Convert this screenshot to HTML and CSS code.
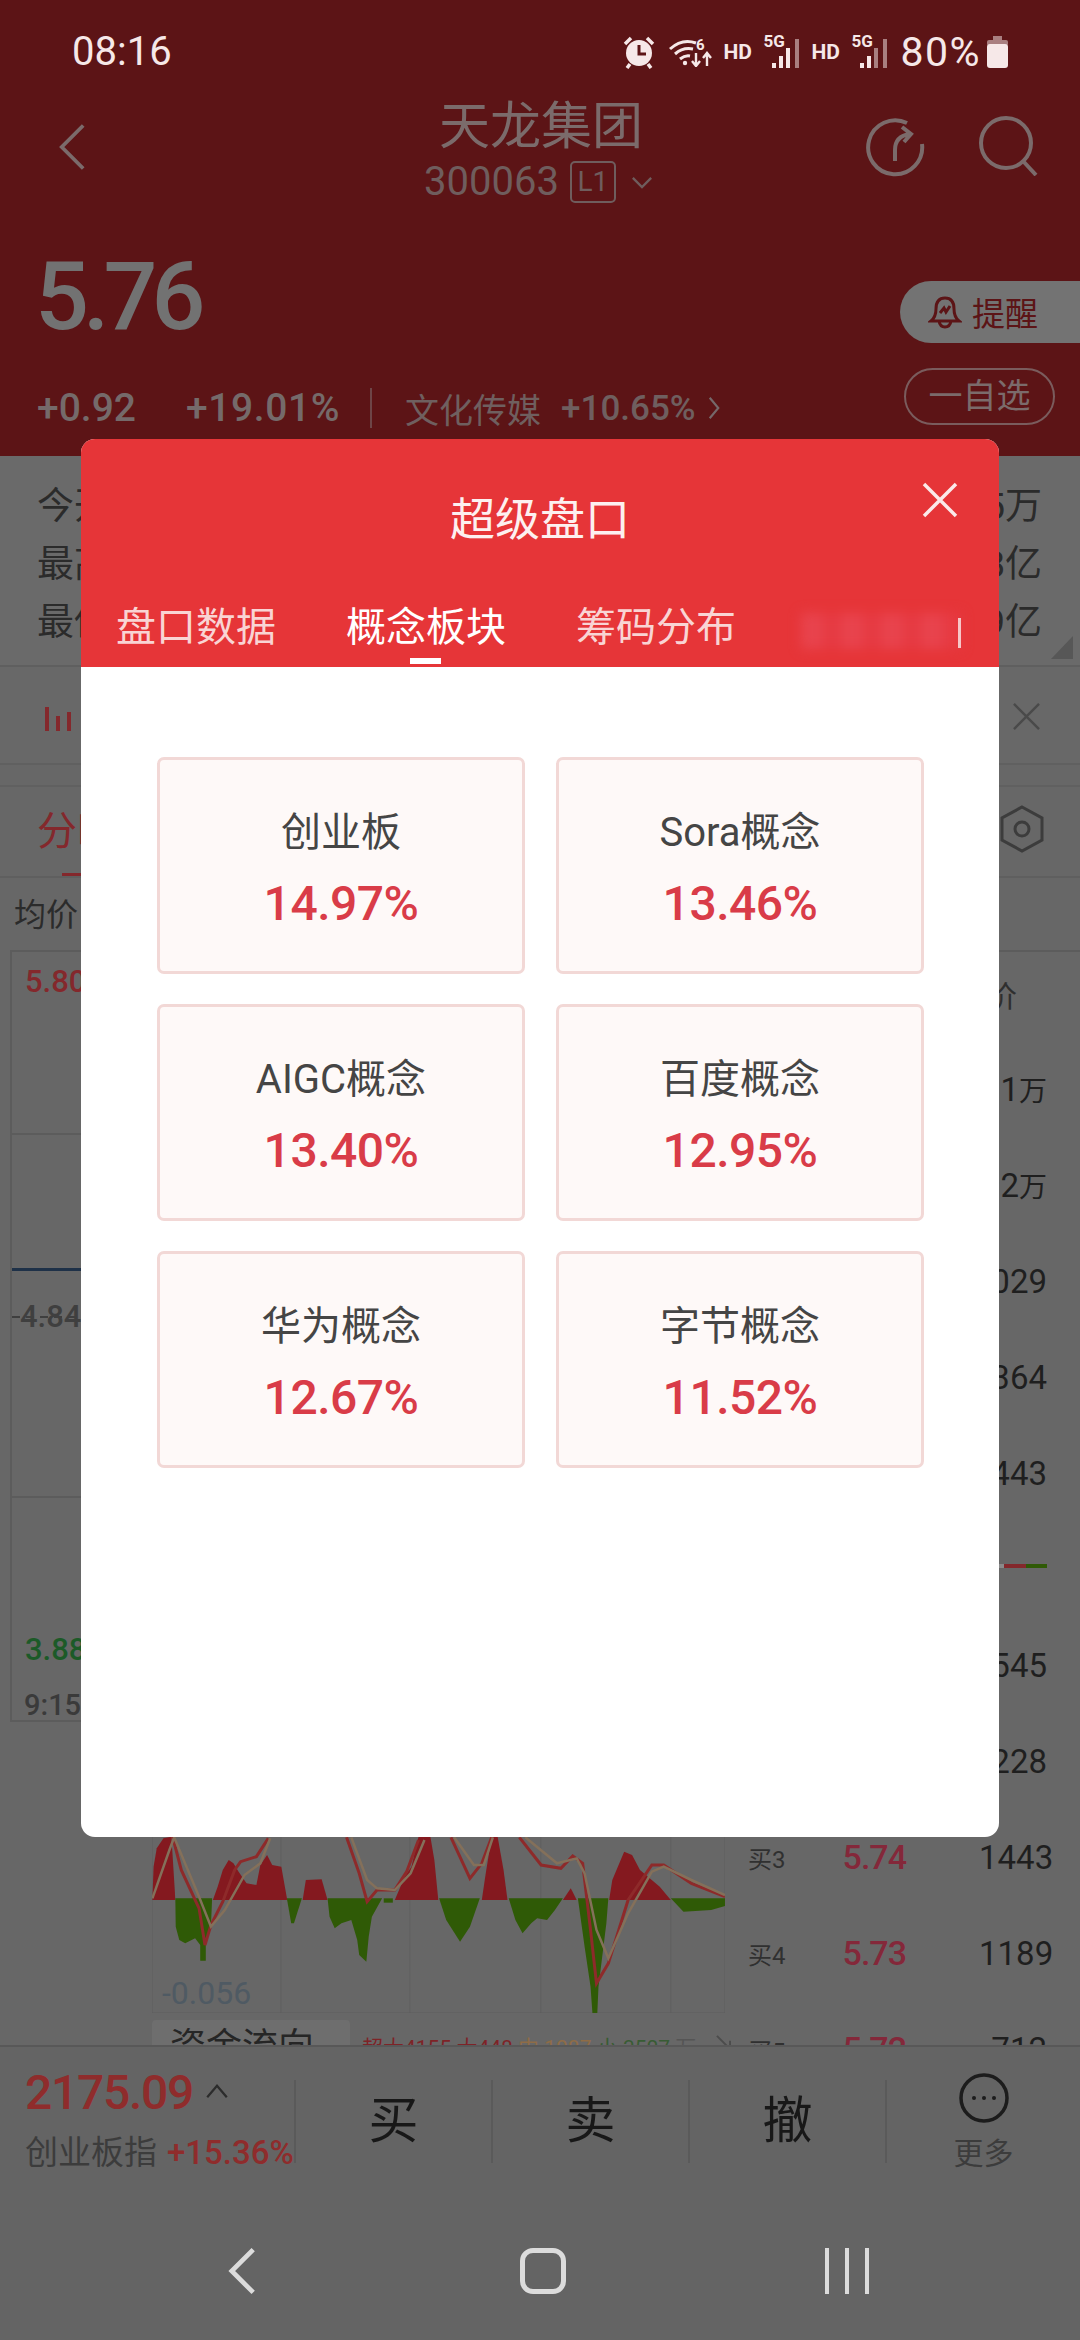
FILE: index.html
```html
<!doctype html>
<html lang="zh-CN">
<head>
	<meta charset="utf-8" />
	<title>超级盘口</title>
	<link rel="stylesheet" href="styles.css">
</head>

<body>
	<div class="head">
		<div class="status">
			<span class="time">08:16</span>
			<div class="status-right">
				<svg class="ic-alarm" viewBox="0 0 32 34"><path d="M2 9 L8 3 M30 9 L24 3 M7 29 L4 33 M25 29 L28 33" stroke="#f6e8e8" stroke-width="3.5" fill="none"/><circle cx="16" cy="18" r="13" fill="#f6e8e8"/><path d="M16 10 V19 H23" stroke="#5c1416" stroke-width="3" fill="none"/></svg>
				<svg class="ic-wifi" viewBox="0 0 44 30"><path d="M1 12 Q13 1 27 6 M6 17 Q14 10 24 12 M11 22 Q16 18 21 19" stroke="#f6e8e8" stroke-width="3" fill="none"/><circle cx="16" cy="26" r="2.2" fill="#f6e8e8"/><text x="27" y="13" class="wifi-six">6</text><path d="M27 16 V28 M23 24 L27 29 L31 24 M38 29 V17 M34 21 L38 16 L42 21" stroke="#f6e8e8" stroke-width="2.4" fill="none"/></svg>
				<span class="hd">HD</span>
				<div class="sig">
					<span class="five-g">5G</span>
					<svg class="ic-sig" viewBox="0 0 29 30"><rect x="0" y="25" width="4" height="5" fill="#f6e8e8"/><rect x="7" y="18" width="4" height="12" fill="#f6e8e8"/><rect x="14" y="10" width="4" height="20" fill="#f6e8e8"/><rect x="23" y="1" width="4" height="29" fill="#a97f80"/></svg>
				</div>
				<span class="hd hd2">HD</span>
				<div class="sig">
					<span class="five-g">5G</span>
					<svg class="ic-sig" viewBox="0 0 29 30"><rect x="0" y="25" width="4" height="5" fill="#f6e8e8"/><rect x="7" y="18" width="4" height="12" fill="#f6e8e8"/><rect x="14" y="10" width="4" height="20" fill="#a97f80"/><rect x="23" y="1" width="4" height="29" fill="#a97f80"/></svg>
				</div>
				<span class="batt-num">80%</span>
				<svg class="ic-batt" viewBox="0 0 21 32"><path d="M6 0 H15 V4 H6 Z" fill="#a97f80"/><rect x="0" y="4" width="21" height="6" rx="2" fill="#a97f80"/><rect x="0" y="8" width="21" height="24" rx="3" fill="#f6e8e8"/></svg>
			</div>
		</div>

		<div class="nav">
			<svg class="ic-back" viewBox="0 0 30 50"><path d="M27 2 L4 25 L27 48" stroke="#7b6b6b" stroke-width="4" fill="none"/></svg>
			<div class="nav-mid">
				<div class="stock-name">天龙集团</div>
				<div class="stock-code">
					<span>300063</span>
					<span class="level">L1</span>
					<svg class="ic-down" viewBox="0 0 24 14"><path d="M2 2 L12 12 L22 2" stroke="#6f5d5d" stroke-width="2.5" fill="none"/></svg>
				</div>
			</div>
			<div class="nav-right">
				<svg class="ic-share" viewBox="0 0 60 60"><path d="M41 5 A27 27 0 1 0 56 26" stroke="#7b6b6b" stroke-width="4" fill="none"/><path d="M29 43 V32 Q29 18 44 16 M36 9 L45 16 L38 24" stroke="#7b6b6b" stroke-width="4" fill="none"/></svg>
				<svg class="ic-search" viewBox="0 0 60 60"><circle cx="28" cy="27" r="25" stroke="#7b6b6b" stroke-width="4" fill="none"/><path d="M45 45 L58 59" stroke="#7b6b6b" stroke-width="4" fill="none"/></svg>
			</div>
		</div>

		<div class="quote">
			<div class="quote-left">
				<div class="price">5.76</div>
				<div class="change">
					<b>+0.92</b>
					<b class="pct">+19.01%</b>
					<span class="sector">文化传媒</span>
					<span class="sector-pct">+10.65%</span>
					<svg class="ic-more" viewBox="0 0 14 28"><path d="M2 2 L12 14 L2 26" stroke="#75686a" stroke-width="2.5" fill="none"/></svg>
				</div>
			</div>
			<div class="quote-right">
				<div class="remind">
					<svg class="ic-bell" viewBox="0 0 34 34"><path d="M3 26 Q8 22 8 14 Q8 3 17 3 Q26 3 26 14 Q26 22 31 26 Z M11 26 Q12 32 17 32 Q22 32 23 26 M12 18 L16 13 L18 17 L22 11" stroke="#5c1416" stroke-width="3" fill="none"/></svg>
					<span>提醒</span>
				</div>
				<div class="watch">一自选</div>
			</div>
		</div>
	</div>

	<div class="stats">
		<div class="stat-line"><span>今开</span><span>5万</span></div>
		<div class="stat-line"><span>最高</span><span>8亿</span></div>
		<div class="stat-line"><span>最低</span><span>9亿</span></div>
		<i class="corner"></i>
	</div>

	<div class="notice">
		<svg class="ic-bars" viewBox="0 0 40 24"><rect x="0" y="0" width="4" height="24" fill="#84282c"/><rect x="11" y="9" width="4" height="15" fill="#84282c"/><rect x="22" y="5" width="4" height="19" fill="#84282c"/></svg>
		<svg class="ic-x" viewBox="0 0 28 28"><path d="M1 1 L27 27 M27 1 L1 27" stroke="#4a4a4a" stroke-width="2.5" fill="none"/></svg>
	</div>

	<div class="chart-tabs">
		<span class="chart-tab">分时</span>
		<svg class="ic-hex" viewBox="0 0 44 48"><path d="M22 2 L42 13 V35 L22 46 L2 35 V13 Z" stroke="#3c3c3c" stroke-width="3" fill="none"/><circle cx="22" cy="24" r="7" stroke="#3c3c3c" stroke-width="3" fill="none"/></svg>
	</div>

	<div class="avg-row">均价</div>

	<div class="market">
		<div class="market-left">
			<div class="price-chart">
				<span class="axis axis-top">5.80</span>
				<i class="hline hline-a"></i>
				<i class="hline hline-blue"></i>
				<span class="axis axis-mid">4.84</span>
				<i class="hline hline-dash"></i>
				<i class="hline hline-b"></i>
				<span class="axis axis-low">3.88</span>
				<span class="axis axis-time">9:15</span>
			</div>
			<div class="macd">
				<svg viewBox="56 0 1449 549" preserveAspectRatio="none">
					<path d="M56 0 V549 H1505 V0 M382 0 V549 M708 0 V549 M1039 0 V549 M1368 0 V549" stroke="#5c5c5c" stroke-width="2" fill="none"/>
					<g fill="#84191f">
						<path d="M57 210 L60 110 L68 55 L85 25 L105 20 L112 150 L115 210 Z"/>
						<path d="M210 210 L222 170 L235 120 L250 90 L262 100 L275 125 L295 160 L320 165 L330 105 L347 75 L360 105 L383 110 L398 210 Z"/>
						<path d="M437 210 L445 150 L485 148 L500 210 Z"/>
						<path d="M670 210 L695 140 L712 110 L730 20 L760 20 L770 90 L780 210 Z"/>
						<path d="M890 210 L900 130 L915 20 L930 20 L945 120 L955 210 Z"/>
						<path d="M1095 210 L1115 175 L1130 210 Z"/>
						<path d="M1212 210 L1220 150 L1250 65 L1270 75 L1290 120 L1340 170 L1368 210 Z"/>
					</g>
					<g fill="#2f5a06">
						<path d="M115 205 L116 290 L125 330 L140 340 L165 325 L178 345 L178 392 L192 392 L192 345 L205 290 L208 205 Z"/>
						<path d="M397 205 L408 280 L415 280 L435 205 Z"/>
						<path d="M500 205 L505 260 L518 295 L535 280 L560 270 L575 330 L580 375 L598 395 L604 320 L612 260 L638 205 Z"/>
						<path d="M642 205 H665 V218 H642 Z"/>
						<path d="M782 205 L800 270 L835 335 L860 290 L885 205 Z"/>
						<path d="M958 205 L975 270 L993 310 L1015 280 L1030 265 L1055 270 L1075 240 L1095 205 Z"/>
						<path d="M1133 205 L1150 350 L1165 470 L1170 553 L1182 553 L1185 470 L1205 280 L1210 205 Z"/>
						<path d="M1368 205 L1400 245 L1470 240 L1505 228 V205 Z"/>
					</g>
					<g class="macd-red">
						<path d="M108 20 L130 120 L175 235 L190 345 L205 285 L235 215 L265 120 L280 95 L320 80 L350 25"/>
						<path d="M548 22 L580 130 L600 215 L625 180 L670 180 L700 125 L730 30"/>
						<path d="M812 22 L860 145 L890 100 L915 22"/>
						<path d="M985 22 L1040 105 L1090 115 L1120 78 L1145 100 L1165 300 L1180 460 L1210 400 L1260 210 L1320 105 L1350 105 L1420 160 L1505 200"/>
					</g>
					<g class="macd-tan">
						<path d="M57 205 L100 60 L112 22 L175 200 L205 290 L240 240 L290 135 L330 100 L355 25"/>
						<path d="M560 22 L600 150 L625 175 L670 180 L710 130 L745 30"/>
						<path d="M820 22 L870 105 L895 105 L918 22"/>
						<path d="M1000 22 L1080 100 L1130 85 L1150 130 L1180 300 L1210 385 L1260 250 L1320 125 L1350 110 L1420 150 L1505 195"/>
					</g>
				</svg>
				<span class="macd-val">-0.056</span>
			</div>
			<div class="fund-row">
				<span class="fund-chip">资金流向</span>
				<span class="fund-text"><em class="f-red">超大4155 大448</em> <em class="f-tan">中 1087</em> <em class="f-green">小 3507</em> 万</span>
				<svg class="ic-fund" viewBox="0 0 16 16"><path d="M1 1 L15 15 M15 6 V15 H6" stroke="#4c4c4c" stroke-width="2" fill="none"/></svg>
			</div>
		</div>
		<div class="book">
			<div class="book-row book-head">价</div>
			<div class="book-row">31<span class="wan">万</span></div>
			<div class="book-row">92<span class="wan">万</span></div>
			<div class="book-row">029</div>
			<div class="book-row">364</div>
			<div class="book-row">443</div>
			<div class="book-row book-ratio"><i class="r-gray"></i><i class="r-red"></i><i class="r-green"></i></div>
			<div class="book-row">545</div>
			<div class="book-row">228</div>
			<div class="book-row"><span class="b-label">买3</span><span class="b-price">5.74</span><span class="b-vol">1443</span></div>
			<div class="book-row"><span class="b-label">买4</span><span class="b-price">5.73</span><span class="b-vol">1189</span></div>
			<div class="book-row"><span class="b-label">买5</span><span class="b-price">5.72</span><span class="b-vol">712</span></div>
		</div>
	</div>

	<div class="bottom">
		<div class="index">
			<div class="index-top">
				<span class="index-num">2175.09</span>
				<svg class="ic-up" viewBox="0 0 26 18"><path d="M2 16 L13 3 L24 16" stroke="#2c2c2c" stroke-width="2.5" fill="none"/></svg>
			</div>
			<div class="index-sub"><span>创业板指</span> <b>+15.36%</b></div>
		</div>
		<div class="act">买</div>
		<div class="act">卖</div>
		<div class="act">撤</div>
		<div class="act-more">
			<svg class="ic-dots" viewBox="0 0 50 50"><circle cx="25" cy="25" r="23" stroke="#1c1c1c" stroke-width="3.5" fill="none"/><circle cx="15" cy="25" r="2" fill="#1c1c1c"/><circle cx="25" cy="25" r="2" fill="#1c1c1c"/><circle cx="35" cy="25" r="2" fill="#1c1c1c"/></svg>
			<span>更多</span>
		</div>
	</div>

	<div class="sysnav">
		<svg class="ic-sys-back" viewBox="0 0 30 50"><path d="M27 2 L4 25 L27 48" stroke="#dcdcdc" stroke-width="5" fill="none"/></svg>
		<i class="sys-home"></i>
		<div class="sys-recent"><i></i><i></i><i></i></div>
	</div>

	<!-- popup -->
	<div class="modal">
		<div class="modal-head">
			<div class="modal-title">超级盘口</div>
			<svg class="modal-close" viewBox="0 0 36 36"><path d="M2 2 L34 34 M34 2 L2 34" stroke="#fbe9e9" stroke-width="3.5" fill="none"/></svg>
			<div class="modal-tabs">
				<span class="modal-tab">盘口数据</span>
				<span class="modal-tab modal-tab-on">概念板块</span>
				<span class="modal-tab">筹码分布</span>
				<span class="modal-tab-blur"><i></i><b></b></span>
			</div>
		</div>
		<div class="cards">
			<div class="card"><div class="card-name">创业板</div><div class="card-pct">14.97%</div></div>
			<div class="card"><div class="card-name">Sora概念</div><div class="card-pct">13.46%</div></div>
			<div class="card"><div class="card-name">AIGC概念</div><div class="card-pct">13.40%</div></div>
			<div class="card"><div class="card-name">百度概念</div><div class="card-pct">12.95%</div></div>
			<div class="card"><div class="card-name">华为概念</div><div class="card-pct">12.67%</div></div>
			<div class="card"><div class="card-name">字节概念</div><div class="card-pct">11.52%</div></div>
		</div>
	</div>
</body>
</html>
```

FILE: styles.css
```css
/*reset*/
body,div,p{margin:0;padding:0;}
i,em{font-style:normal;}
svg{display:block;flex:none;}
body{position:relative;width:1080px;height:2340px;overflow:hidden;background:#676767;color:#262626;font-family:Roboto,"Noto Sans CJK SC",sans-serif;}

/*head*/
.head{height:456px;background:#5c1416;}
.status{height:104px;display:flex;justify-content:space-between;align-items:center;padding:0 72px;}
.time{font-size:40px;color:#f6e8e8;line-height:1;}
.status-right{display:flex;align-items:center;}
.ic-alarm{width:32px;height:34px;margin-right:14px;}
.ic-wifi{width:44px;height:30px;margin-right:10px;}
.wifi-six{font-size:15px;font-weight:700;fill:#f6e8e8;}
.hd{font-size:21px;font-weight:700;color:#f6e8e8;width:28px;}
.hd2{margin-left:11px;}
.sig{position:relative;width:37px;height:32px;margin-left:12px;}
.five-g{position:absolute;left:0;top:-5px;font-size:17px;font-weight:700;color:#f6e8e8;}
.ic-sig{position:absolute;left:9px;top:2px;width:29px;height:30px;}
.batt-num{font-size:41px;color:#f6e8e8;letter-spacing:1.5px;margin-left:12px;}
.ic-batt{width:21px;height:32px;margin-left:6px;}

.nav{height:106px;display:grid;grid-template-columns:1fr auto 1fr;align-items:start;padding:0 42px 0 44px;box-sizing:border-box;}
.ic-back{width:28px;height:48px;margin:19px 0 0 14px;}
.nav-mid{text-align:center;margin-top:-7px;}
.stock-name{font-size:51px;line-height:60px;color:#7b6b6b;}
.stock-code{display:flex;align-items:center;gap:11px;margin:3px 0 0 -5px;color:#6f5d5d;font-size:40px;line-height:44px;}
.level{border:2px solid #6f5d5d;border-radius:5px;font-size:28px;line-height:38px;width:42px;text-align:center;}
.ic-down{width:22px;height:13px;margin-left:4px;}
.nav-right{display:flex;justify-content:flex-end;gap:52px;margin-top:14px;}
.ic-share{width:60px;height:60px;}
.ic-search{width:60px;height:60px;margin-top:-2px;}

.quote{display:flex;justify-content:space-between;}
.quote-left{padding:36px 0 0 35px;}
.price{font-size:95px;font-weight:500;line-height:102px;letter-spacing:-6px;color:#727272;}
.change{display:flex;align-items:center;margin:40px 0 0 2px;height:40px;color:#6f6666;}
.change b{font-size:39px;font-weight:500;color:#756a6a;}
.change .pct{margin-left:50px;padding-right:30px;border-right:2px solid #6e4547;line-height:40px;letter-spacing:.6px;}
.sector{font-size:34px;margin-left:33px;color:#6f5f5f;}
.sector-pct{font-size:35px;font-weight:500;margin-left:20px;color:#6f5f5f;}
.ic-more{width:12px;height:24px;margin-left:12px;}
.quote-right{display:flex;flex-direction:column;align-items:flex-end;padding-top:71px;}
.remind{width:180px;height:62px;box-sizing:border-box;background:#737373;border-radius:31px 0 0 31px;display:flex;align-items:center;padding-left:28px;gap:10px;color:#5c1416;font-size:33px;}
.ic-bell{width:34px;height:34px;}
.watch{width:151px;height:57px;box-sizing:border-box;margin:25px 25px 0 0;border:2px solid #7a5c5d;border-radius:29px;text-align:center;line-height:52px;font-size:34px;color:#7b6b6b;}

/*stats*/
.stats{position:relative;height:211px;box-sizing:border-box;padding:22px 38px 0 37px;border-bottom:2px solid #5f5f5f;background:#6a6a6a;}
.stat-line{display:flex;justify-content:space-between;font-size:37px;line-height:58px;color:#2b2b2b;}
.corner{position:absolute;right:7px;bottom:6px;border-style:solid;border-width:0 0 23px 22px;border-color:transparent transparent #575757 transparent;}

.notice{height:98px;box-sizing:border-box;padding:40px 40px 0 45px;display:flex;justify-content:space-between;align-items:flex-start;background:#686868;border-bottom:2px solid #606060;}
.ic-bars{width:40px;height:24px;}
.ic-x{width:27px;height:27px;margin-top:-4px;}

.chart-tabs{margin-top:20px;height:93px;box-sizing:border-box;padding:0 36px 0 37px;display:flex;justify-content:space-between;align-items:flex-start;border-bottom:2px solid #5f5f5f;border-top:2px solid #606060;}
.chart-tab{position:relative;height:89px;box-sizing:border-box;padding-top:15px;font-size:40px;line-height:60px;color:#84282c;}
.chart-tab::after{content:"";position:absolute;left:25px;bottom:0;width:40px;height:3px;background:#84282c;}
.ic-hex{width:44px;height:48px;margin-top:18px;}
.avg-row{height:72px;box-sizing:border-box;padding:15px 0 0 14px;font-size:32px;line-height:44px;color:#2b2b2b;}

/*market*/
.market{display:flex;height:1095px;overflow:hidden;}
.market-left{width:725px;}
.price-chart{position:relative;height:772px;margin-left:10px;box-sizing:border-box;border-top:2px solid #5c5c5c;border-left:2px solid #5c5c5c;border-bottom:2px solid #5c5c5c;}
.axis{position:absolute;left:13px;font-size:31px;font-weight:500;line-height:36px;}
.axis-top{top:12px;color:#84282c;}
.axis-mid{top:347px;color:#3f3f3f;left:8px;}
.axis-low{top:680px;color:#1c5a28;}
.axis-time{top:735px;left:12px;font-size:29px;color:#3a3a3a;}
.hline{position:absolute;left:0;right:0;height:2px;background:#5c5c5c;}
.hline-a{top:181px;}
.hline-blue{top:316px;background:#1e3148;height:3px;}
.hline-dash{top:364px;background:repeating-linear-gradient(90deg,#3f3f3f 0 8px,transparent 8px 14px);}
.hline-b{top:544px;}
.macd{position:relative;width:573px;height:183px;margin:108px 0 0 152px;}
.macd svg{width:573px;height:183px;}
.macd-red path{stroke:#8e2a2a;stroke-width:3;fill:none;vector-effect:non-scaling-stroke;}
.macd-tan path{stroke:#84705a;stroke-width:2.5;fill:none;vector-effect:non-scaling-stroke;}
.macd-val{position:absolute;left:10px;bottom:2px;font-size:32px;line-height:36px;color:#4f5a63;}
.fund-row{display:flex;align-items:flex-start;margin:7px 0 0 152px;white-space:nowrap;}
.fund-chip{flex:none;width:198px;box-sizing:border-box;padding-left:18px;background:#6e6e6e;border-radius:4px;height:60px;font-size:36px;line-height:54px;color:#262626;}
.fund-text{margin:13px 0 0 12px;font-size:21px;color:#555;line-height:30px;}
.f-red{color:#7e2327;}
.f-tan{color:#8f6c46;}
.f-green{color:#385c34;}
.ic-fund{width:15px;height:15px;margin:15px 0 0 20px;}

.book{width:355px;box-sizing:border-box;padding-right:33px;border-top:2px solid #5c5c5c;}
.book-row{height:96px;display:flex;justify-content:flex-end;align-items:center;font-size:33px;color:#1f1f1f;}
.book-head{font-size:30px;color:#2f2f2f;padding:0 30px 5px 0;height:89px;box-sizing:border-box;}
.wan{font-size:28px;}
.book-ratio{padding-bottom:6px;box-sizing:border-box;}
.book-ratio i{height:4px;}
.r-gray{width:8px;background:#8a8a8a;}
.r-red{width:22px;background:#84282c;}
.r-green{width:21px;background:#2f5a06;}
.b-label{font-size:24px;color:#303030;margin-right:auto;margin-left:23px;}
.b-price{font-size:34px;font-weight:500;letter-spacing:-1px;color:#84283a;margin-right:73px;}
.b-vol{font-size:33px;width:68px;text-align:right;}

/*bottom*/
.bottom{height:155px;box-sizing:border-box;border-top:2px solid #585858;background:#646464;display:grid;grid-template-columns:294px 197px 197px 197px 195px;}
.index{padding:18px 0 0 25px;white-space:nowrap;}
.index-top{display:flex;align-items:center;gap:12px;}
.index-num{font-size:48px;font-weight:500;line-height:56px;letter-spacing:-1.3px;color:#8f2c2c;}
.ic-up{width:24px;height:16px;margin-top:-4px;}
.index-sub{margin-top:10px;font-size:33px;line-height:44px;color:#3c3c3c;display:flex;gap:10px;}
.index-sub b{font-size:33px;font-weight:500;color:#8f2c2c;}
.act{align-self:start;height:83px;margin-top:33px;border-left:2px solid #5a5a5a;display:flex;align-items:flex-start;justify-content:center;font-size:50px;line-height:83px;color:#181818;}
.act-more{align-self:start;height:83px;margin-top:33px;border-left:2px solid #5a5a5a;display:flex;flex-direction:column;align-items:center;}
.ic-dots{width:50px;height:50px;margin-top:-7px;}
.act-more span{font-size:30px;line-height:40px;margin-top:11px;color:#3c3c3c;}

.sysnav{height:140px;display:flex;align-items:flex-start;padding:47px 0 0 228px;box-sizing:border-box;background:#646464;}
.ic-sys-back{width:28px;height:48px;}
.sys-home{display:block;width:46px;height:46px;box-sizing:border-box;border:5px solid #dcdcdc;border-radius:13px;margin:1px 0 0 264px;}
.sys-recent{display:flex;gap:16px;margin:1px 0 0 259px;}
.sys-recent i{display:block;width:4px;height:46px;background:#dcdcdc;}

/*popup*/
.modal{position:absolute;left:81px;top:439px;width:918px;height:1398px;background:#fff;border-radius:14px;overflow:hidden;}
.modal-head{position:relative;height:228px;background:#e63538;color:#fff;}
.modal-title{text-align:center;font-size:45px;line-height:60px;padding-top:52px;color:#fdf0f0;}
.modal-close{position:absolute;left:841px;top:43px;width:36px;height:36px;}
.modal-tabs{display:flex;align-items:center;padding:51px 0 0 35px;}
.modal-tab{font-size:40px;line-height:52px;width:158px;margin-right:72px;white-space:nowrap;color:#f9d4d4;}
.modal-tab-on{position:relative;color:#fff;}
.modal-tab-on::after{content:"";position:absolute;left:64px;bottom:-10px;width:31px;height:6px;background:#fff;}
.modal-tab-blur{position:relative;display:block;width:160px;height:36px;margin:6px 0 0 -5px;}
.modal-tab-blur i{display:block;height:100%;background:repeating-linear-gradient(90deg,#e8434d 0 22px,#e63a42 22px 40px);filter:blur(6px);}
.modal-tab-blur b{position:absolute;right:0;top:5px;width:3px;height:30px;background:#f7c6c8;}
.cards{display:grid;grid-template-columns:368px 368px;gap:30px 31px;padding:90px 0 0 76px;}
.card{height:217px;box-sizing:border-box;padding-top:48px;background:#fef9f8;border:3px solid #f2d8d6;border-radius:7px;text-align:center;}
.card-name{font-size:40px;line-height:50px;color:#454545;}
.card-pct{font-size:48px;line-height:60px;margin-top:16px;font-weight:500;letter-spacing:-.5px;color:#d93c48;}
```
